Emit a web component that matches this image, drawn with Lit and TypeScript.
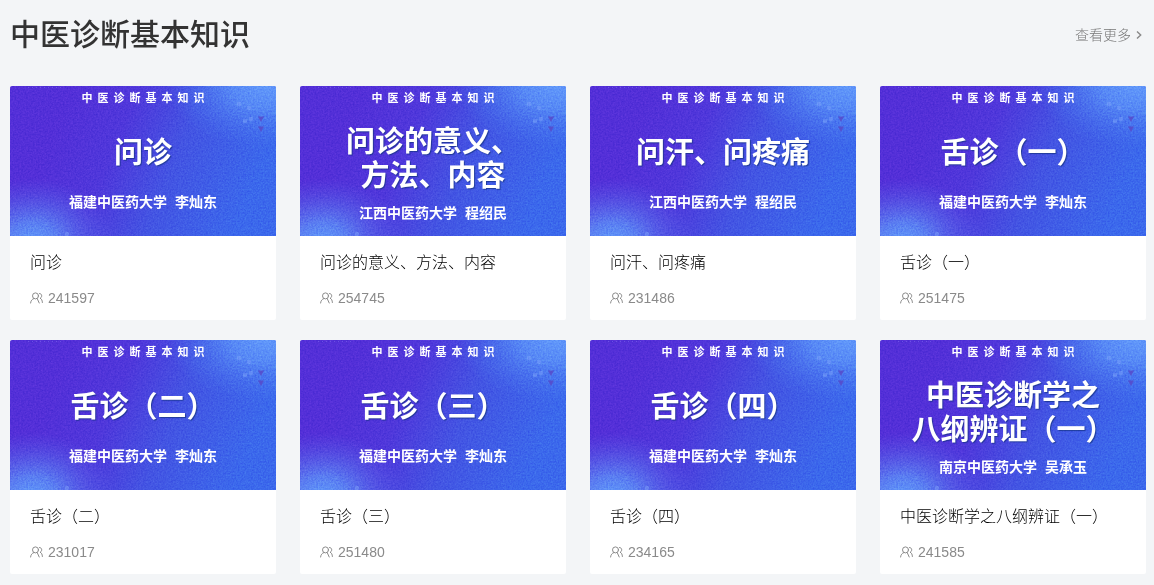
import { LitElement, html, css, svg } from "lit";
import { customElement, property } from "lit/decorators.js";

interface Course {
  title: string;
  cover: string[];
  school: string;
  teacher: string;
  views: number;
}

const FJ = "福建中医药大学";
const JX = "江西中医药大学";

const COURSES: Course[] = [
  { title: "问诊", cover: ["问诊"], school: FJ, teacher: "李灿东", views: 241597 },
  { title: "问诊的意义、方法、内容", cover: ["问诊的意义、", "方法、内容"], school: JX, teacher: "程绍民", views: 254745 },
  { title: "问汗、问疼痛", cover: ["问汗、问疼痛"], school: JX, teacher: "程绍民", views: 231486 },
  { title: "舌诊（一）", cover: ["舌诊（一）"], school: FJ, teacher: "李灿东", views: 251475 },
  { title: "舌诊（二）", cover: ["舌诊（二）"], school: FJ, teacher: "李灿东", views: 231017 },
  { title: "舌诊（三）", cover: ["舌诊（三）"], school: FJ, teacher: "李灿东", views: 251480 },
  { title: "舌诊（四）", cover: ["舌诊（四）"], school: FJ, teacher: "李灿东", views: 234165 },
  { title: "中医诊断学之八纲辨证（一）", cover: ["中医诊断学之", "八纲辨证（一）"], school: "南京中医药大学", teacher: "吴承玉", views: 241585 },
];

// Gradient backdrop with soft corner glows, fine grain and small ornaments.
const artwork = svg`
  <defs>
    <linearGradient id="base" gradientUnits="userSpaceOnUse" x1="50" y1="30" x2="240" y2="110">
      <stop offset="0" stop-color="#532fd8"/>
      <stop offset=".3" stop-color="#4f37db"/>
      <stop offset=".6" stop-color="#4354e3"/>
      <stop offset="1" stop-color="#3b68ec"/>
    </linearGradient>
    <radialGradient id="glow-a" gradientUnits="userSpaceOnUse" cx="0" cy="0" r="1" gradientTransform="translate(22 156) scale(84 64)">
      <stop offset="0" stop-color="#5f98fa"/>
      <stop offset=".3" stop-color="#5c8cf6" stop-opacity=".85"/>
      <stop offset="1" stop-color="#5560ea" stop-opacity="0"/>
    </radialGradient>
    <radialGradient id="glow-b" gradientUnits="userSpaceOnUse" cx="0" cy="0" r="1" gradientTransform="translate(256 -2) scale(100 66)">
      <stop offset="0" stop-color="#6299fb"/>
      <stop offset=".35" stop-color="#5b90f8" stop-opacity=".85"/>
      <stop offset="1" stop-color="#4472ee" stop-opacity="0"/>
    </radialGradient>
    <filter id="grain" x="0" y="0" width="100%" height="100%" color-interpolation-filters="sRGB">
      <feTurbulence type="fractalNoise" baseFrequency=".6" numOctaves="2" seed="4"/>
      <feColorMatrix values="1 0 0 0 0  1 0 0 0 0  1 0 0 0 0  0 0 0 0 1"/>
    </filter>
  </defs>
  <rect width="266" height="150" fill="url(#base)"/>
  <rect width="266" height="150" fill="url(#glow-a)"/>
  <rect width="266" height="150" fill="url(#glow-b)"/>
  <rect class="grain" width="266" height="150" filter="url(#grain)"/>
  <g fill="#8fb6ff" opacity=".35">
    <rect x="227" y="16" width="4" height="4" rx="1"/>
    <rect x="237" y="20" width="4" height="4" rx="1"/>
    <rect x="233" y="33" width="4" height="4" rx="1"/>
    <rect x="239" y="31" width="4" height="4" rx="1"/>
    <rect x="55" y="146" width="4" height="4" rx="1"/>
  </g>
  <g fill="#5848c8" opacity=".8">
    <path d="M248 30.500h6l-3 5.500z"/>
    <path d="M248 40.500h6l-3 5.500z"/>
  </g>
  <path d="M18 1.500h34" stroke="#7a68ea" stroke-width="1" stroke-dasharray="1 3" opacity=".6"/>
`;

@customElement("course-card")
export class CourseCard extends LitElement {
  @property({ attribute: false }) course!: Course;

  static styles = css`
    :host { display: block; }
    .card {
      display: block;
      background: #fff;
      border-radius: 2px;
      overflow: hidden;
      color: inherit;
      text-decoration: none;
    }
    .cover {
      display: grid;
      aspect-ratio: 133 / 75;
      color: #fff;
      overflow: hidden;
    }
    .art, .caption { grid-area: 1 / 1; }
    .art { display: block; width: 100%; height: 100%; }
    .grain { mix-blend-mode: overlay; opacity: .25; }
    .caption {
      z-index: 1;
      display: flex;
      flex-direction: column;
      align-items: center;
      padding-top: 5px;
    }
    .series {
      font-size: 11px;
      line-height: 14px;
      font-weight: 700;
      letter-spacing: 5px;
      padding-left: 5px;
    }
    .main {
      flex: 1;
      display: flex;
      flex-direction: column;
      align-items: center;
      justify-content: center;
      gap: 22px;
      padding-top: 6px;
    }
    .main.double { gap: 10px; }
    .name {
      font-size: 29px;
      line-height: 34px;
      font-weight: 700;
      text-align: center;
      text-shadow: 1px 1px 1px rgba(20, 50, 130, .75);
      white-space: nowrap;
    }
    .line { display: block; }
    .by {
      display: flex;
      gap: 8px;
      font-size: 14px;
      line-height: 20px;
      font-weight: 700;
      white-space: nowrap;
    }
    .info { padding: 15px 20px 12px; }
    .title {
      margin: 0;
      font-size: 16px;
      line-height: 24px;
      font-weight: 300;
      color: #000;
      white-space: nowrap;
      overflow: hidden;
      text-overflow: ellipsis;
    }
    .views {
      display: flex;
      align-items: center;
      gap: 5px;
      margin-top: 13px;
      font-size: 14px;
      line-height: 20px;
      color: #8a8a8a;
    }
    .icon { flex: none; width: 13px; height: 12px; }
  `;

  render() {
    const c = this.course;
    return html`
      <a class="card" href="#">
        <div class="cover">
          <svg class="art" viewBox="0 0 266 150" preserveAspectRatio="none" aria-hidden="true">${artwork}</svg>
          <div class="caption">
            <div class="series">中医诊断基本知识</div>
            <div class="main ${c.cover.length > 1 ? "double" : ""}">
              <div class="name">${c.cover.map((l) => html`<span class="line">${l}</span>`)}</div>
              <div class="by"><span>${c.school}</span><span>${c.teacher}</span></div>
            </div>
          </div>
        </div>
        <div class="info">
          <h3 class="title">${c.title}</h3>
          <div class="views">
            <svg class="icon" viewBox="0 0 13 12" fill="none" stroke="#8a8a8a" stroke-width="1" stroke-linecap="round" aria-hidden="true">
              <circle cx="5.500" cy="3.900" r="3"/>
              <path d="M.6 11C.8 8.700 2 7.200 3.800 6.600M7.200 6.600 9.200 11"/>
              <path d="M9.500 1.500c1.400.1 2.200 1 2.200 2.300S11 5.900 10 6.200c1.500.6 2.300 2 2.400 4.300"/>
            </svg>
            <span>${c.views}</span>
          </div>
        </div>
      </a>
    `;
  }
}

@customElement("app-root")
export class AppRoot extends LitElement {
  static styles = css`
    :host {
      display: block;
      min-height: 100vh;
      box-sizing: border-box;
      padding: 14px 8px 10px 10px;
      background: #f3f5f7;
      font-family: "Liberation Sans", "Noto Sans CJK SC", sans-serif;
    }
    .head {
      display: flex;
      align-items: center;
      justify-content: space-between;
      margin-bottom: 30px;
    }
    .heading {
      margin: 0;
      font-size: 30px;
      line-height: 42px;
      font-weight: 500;
      color: #333;
    }
    .more {
      display: flex;
      align-items: center;
      gap: 5px;
      padding-right: 4px;
      font-size: 14px;
      line-height: 20px;
      font-weight: 300;
      color: #777;
      text-decoration: none;
    }
    .chevron { width: 6px; height: 10px; }
    .grid {
      display: grid;
      grid-template-columns: repeat(auto-fill, minmax(240px, 1fr));
      gap: 20px 24px;
    }
  `;

  render() {
    return html`
      <header class="head">
        <h2 class="heading">中医诊断基本知识</h2>
        <a class="more" href="#">
          <span>查看更多</span>
          <svg class="chevron" viewBox="0 0 6 10" fill="none" stroke="#888" stroke-width="1.400" aria-hidden="true">
            <path d="M1 1.500 4.700 5 1 8.500"/>
          </svg>
        </a>
      </header>
      <main class="grid">
        ${COURSES.map((c) => html`<course-card .course=${c}></course-card>`)}
      </main>
    `;
  }
}
